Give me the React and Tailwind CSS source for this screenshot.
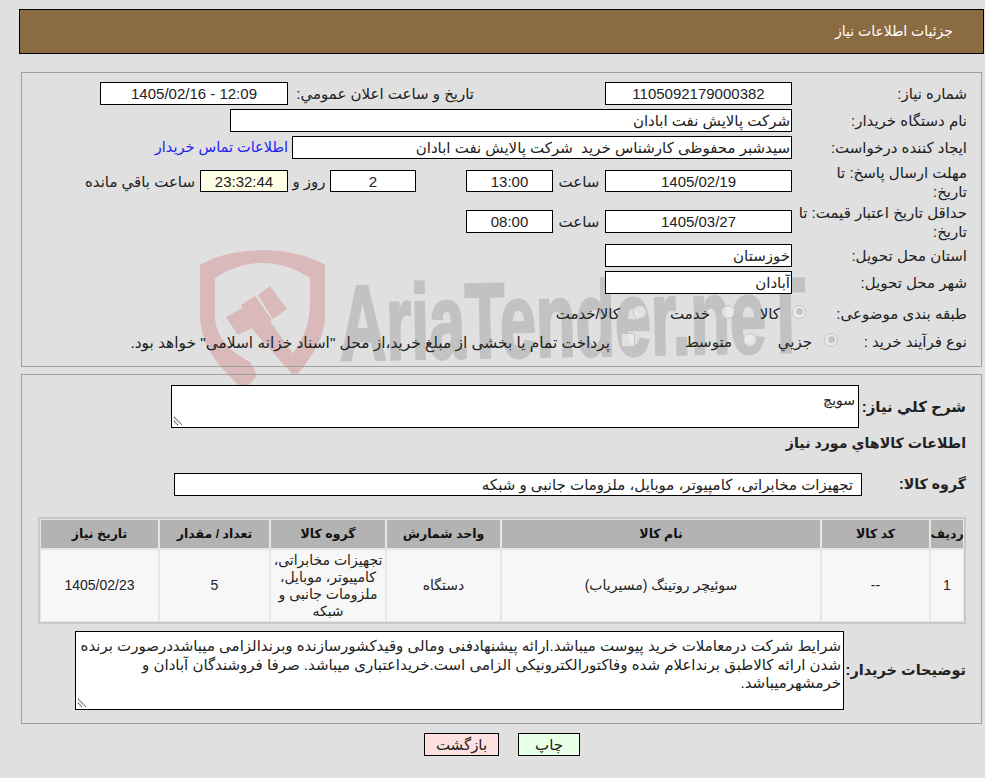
import React from 'react';

const font = "font-['Liberation_Sans','DejaVu_Sans',sans-serif]";

// readonly field with a black border
const Field = ({ className = '', children }) => (
  <div className={`h-[23px] shrink-0 border border-black bg-white flex items-center whitespace-nowrap overflow-hidden leading-none ${className}`}>
    {children}
  </div>
);

const Radio = ({ checked }) => (
  <span className="w-[14px] h-[14px] rounded-full border border-[#c4c4c4] bg-[#eeeeee]/70 flex items-center justify-center shrink-0 -mt-[4px]">
    {checked && <span className="w-[7px] h-[7px] rounded-full bg-[#c4c4c4]" />}
  </span>
);

const Label = ({ className = '', children }) => (
  <div className={`shrink-0 text-right text-[#222] pt-[2px] ${className}`}>{children}</div>
);

const Grip = () => (
  <svg className="absolute left-[1px] bottom-[1px]" width="10" height="10" viewBox="0 0 10 10">
    <path d="M1 1 L9 9 M1 5 L5 9" stroke="#555" strokeWidth="1.2" strokeDasharray="1.4 0.7" fill="none" />
  </svg>
);

const Watermark = () => (
  <svg dir="ltr" className="absolute left-[195px] top-[245px]" width="660" height="170" viewBox="0 0 660 170">
    <g fill="#d9b9b9">
      <path d="M5 20 C40 0 95 0 130 20 L130 70 C130 95 115 113 102 130 L92 117 C105 100 115 82 115 60 L115 33 C85 13 50 13 20 33 L20 70 C20 90 32 105 55 117 L62 130 L50 145 C25 125 5 100 5 70 Z" />
      <path d="M31 72 L47 63 L59 82 L43 90 Z" />
      <path d="M46 60 L60 51 L77 75 L75 76 L108 123 L98 130 L58 85 Z" />
      <path d="M63 50 L75 41 L92 64 L78 74 Z" />
    </g>
    <text
      x="145"
      y="115"
      direction="ltr"
      fill="#c2c2c2"
      stroke="#c2c2c2"
      strokeWidth="3"
      fontFamily="'Liberation Sans', sans-serif"
      fontWeight="700"
      fontSize="106"
      textLength="466"
      lengthAdjust="spacingAndGlyphs"
      transform="rotate(-1 145 115)"
    >
      AriaTender.neT
    </text>
  </svg>
);

const headers = [
  ['w-[32px]', 'رديف'],
  ['w-[107px]', 'کد کالا'],
  ['w-[318px]', 'نام کالا'],
  ['w-[113px]', 'واحد شمارش'],
  ['w-[114px]', 'گروه کالا'],
  ['w-[109px]', 'تعداد / مقدار'],
  ['w-[117px]', 'تاريخ نياز'],
];

const cells = ['1', '--', 'سوئیچر روتینگ (مسیریاب)', 'دستگاه', 'تجهیزات مخابراتی، کامپیوتر، موبایل، ملزومات جانبی و شبکه', '5', '1405/02/23'];

export default function App() {
  return (
    <div dir="rtl" className={`relative w-[985px] h-[778px] overflow-hidden bg-[#e0e0e0] text-[15px] text-[#222] ${font}`}>
      <Watermark />

      <div className="relative pt-[9px] pl-[19px] pr-px">
        <div className="h-[45px] border border-black bg-[#8b6b42] flex items-center pr-[30px] text-white text-[14px]">
          جزئیات اطلاعات نیاز
        </div>
      </div>

      {/* top panel */}
      <div className="relative mt-[18px] ml-[21px] mr-[3px] h-[295px] border border-[#a0a0a0] pt-[9px]">
        <div className="flex flex-col">
          <div className="flex items-center h-[23px]">
            <Label className="w-[189px] pr-[14px]">شماره نیاز:</Label>
            <Field className="w-[187px] justify-center">1105092179000382</Field>
            <Label className="w-[317px] pr-[131px] whitespace-nowrap">تاریخ و ساعت اعلان عمومي:</Label>
            <Field className="w-[188px] justify-center"><span dir="ltr">1405/02/16 - 12:09</span></Field>
          </div>
          <div className="flex items-center h-[23px] mt-[4px]">
            <Label className="w-[189px] pr-[14px]">نام دستگاه خریدار:</Label>
            <Field className="w-[562px] px-px">شرکت پالایش نفت ابادان</Field>
          </div>
          <div className="flex items-center h-[23px] mt-[4px]">
            <Label className="w-[189px] pr-[14px]">ایجاد کننده درخواست:</Label>
            <Field className="w-[500px] px-px">سیدشبر محفوظی کارشناس خرید&nbsp; شرکت پالایش نفت ابادان</Field>
            <span className="mr-[4px] text-[14.5px] text-[#2222ee] whitespace-nowrap">اطلاعات تماس خریدار</span>
          </div>
          <div className="flex items-center h-[36px] mt-[4px]">
            <Label className="w-[189px] pr-[14px] leading-[19px] whitespace-nowrap">مهلت ارسال پاسخ: تا<br />تاریخ:</Label>
            <Field className="w-[187px] !h-[22px] justify-center">1405/02/19</Field>
            <Label className="w-[52px] !text-center">ساعت</Label>
            <Field className="w-[87px] !h-[22px] justify-center">13:00</Field>
            <div className="w-[50px]" />
            <Field className="w-[86px] !h-[22px] justify-center">2</Field>
            <Label className="w-[42px] !text-center">روز و</Label>
            <Field className="w-[88px] !h-[22px] justify-center !bg-[#ffffe8]">23:32:44</Field>
            <Label className="mr-[5px] whitespace-nowrap">ساعت باقي مانده</Label>
          </div>
          <div className="flex items-center h-[36px] mt-[4px]">
            <Label className="w-[189px] pr-[14px] leading-[19px] whitespace-nowrap">حداقل تاریخ اعتبار قیمت: تا<br />تاریخ:</Label>
            <Field className="w-[187px] justify-center">1405/03/27</Field>
            <Label className="w-[52px] !text-center">ساعت</Label>
            <Field className="w-[87px] justify-center">08:00</Field>
          </div>
          <div className="flex items-center h-[23px] mt-[5px]">
            <Label className="w-[189px] pr-[14px]">استان محل تحویل:</Label>
            <Field className="w-[187px] px-px">خوزستان</Field>
          </div>
          <div className="flex items-center h-[23px] mt-[4px]">
            <Label className="w-[189px] pr-[14px]">شهر محل تحویل:</Label>
            <Field className="w-[187px] px-px">آبادان</Field>
          </div>
          <div className="flex items-center h-[23px] mt-[8px]">
            <Label className="w-[175px] pr-[14px] whitespace-nowrap">طبقه بندی موضوعی:</Label>
            <Radio checked />
            <span className="w-[45px] mr-[12px] pt-[2px]">کالا</span>
            <Radio />
            <span className="w-[63px] mr-[11px] pt-[2px]">خدمت</span>
            <Radio />
            <span className="mr-[13px] pt-[2px]">کالا/خدمت</span>
          </div>
          <div className="flex items-center h-[23px] mt-[5px]">
            <Label className="w-[143px] pr-[14px] whitespace-nowrap">نوع فرآیند خرید :</Label>
            <Radio checked />
            <span className="w-[55px] mr-[12px] pt-[2px]">جزيي</span>
            <Radio />
            <span className="w-[97px] mr-[11px] pt-[2px]">متوسط</span>
            <span className="w-[14px] h-[14px] rounded-[2px] border border-[#c4c4c4] bg-[#eeeeee]/70 shrink-0 -mt-[4px]" />
            <span className="mr-[11px] pt-[2px] text-[15.4px] whitespace-nowrap">پرداخت تمام یا بخشی از مبلغ خرید،از محل "اسناد خزانه اسلامی" خواهد بود.</span>
          </div>
        </div>
      </div>

      {/* bottom panel */}
      <div className="relative mt-[7px] ml-[21px] mr-[3px] h-[350px] border border-[#a0a0a0] pt-[10px] pr-[15px]">
        <div className="flex items-start h-[43px]">
          <div className="w-[107px] mt-[11px] text-right font-bold whitespace-nowrap">شرح کلي نیاز:</div>
          <div className="relative w-[688px] h-[43px] border border-black bg-white px-[3px] pt-[4px] text-[14px] leading-[20px]">
            سویچ
            <Grip />
          </div>
        </div>
        <div className="font-bold text-[14.2px] mt-[3px] h-[24px] leading-[24px]">اطلاعات کالاهاي مورد نیاز</div>
        <div className="flex items-center h-[23px] mt-[18px]">
          <div className="w-[104px] font-bold text-[14.2px]">گروه کالا:</div>
          <Field className="w-[688px] pr-[8px]">تجهیزات مخابراتی، کامپیوتر، موبایل، ملزومات جانبی و شبکه</Field>
        </div>

        <div className="mt-[21px] w-[928px] border-2 border-[#c8c8c8] bg-[#e6e6e6] p-[1px] flex flex-col gap-[2px]">
          <div className="flex gap-[2px]">
            {headers.map(([w, t]) => (
              <div key={t} className={`${w} h-[28px] bg-[#b3b3b3] flex items-center justify-center font-bold text-[12.5px] text-[#111] whitespace-nowrap`}>{t}</div>
            ))}
          </div>
          <div className="flex gap-[2px]">
            {cells.map((t, i) => (
              <div key={i} className={`${headers[i][0]} h-[71px] bg-[#f7f7f7] flex items-center justify-center text-center text-[14px] leading-[17px] px-[2px]`}>{t}</div>
            ))}
          </div>
        </div>

        <div className="flex items-center mt-[7px] h-[79px]">
          <div className="w-[122px] font-bold text-[14.5px] whitespace-nowrap">توضیحات خریدار:</div>
          <div className="relative w-[769px] h-[79px] border border-black bg-white px-[2px] pt-[5px] leading-[18.5px]">
            شرایط شرکت درمعاملات خرید پیوست میباشد.ارائه پیشنهادفنی ومالی وقیدکشورسازنده وبرندالزامی میباشددرصورت برنده شدن ارائه کالاطبق برنداعلام شده وفاکتورالکترونیکی الزامی است.خریداعتباری میباشد. صرفا فروشندگان آبادان و خرمشهرمیباشد.
            <Grip />
          </div>
        </div>
      </div>

      <div className="flex gap-[19px] justify-center pl-[19px] mt-[9px]" dir="ltr">
        <button className="w-[75px] h-[23px] border border-black bg-[#ffe0e0] text-[#222]">بازگشت</button>
        <button className="w-[62px] h-[23px] border border-black bg-[#e8ffe8] text-[#222]">چاپ</button>
      </div>
    </div>
  );
}
